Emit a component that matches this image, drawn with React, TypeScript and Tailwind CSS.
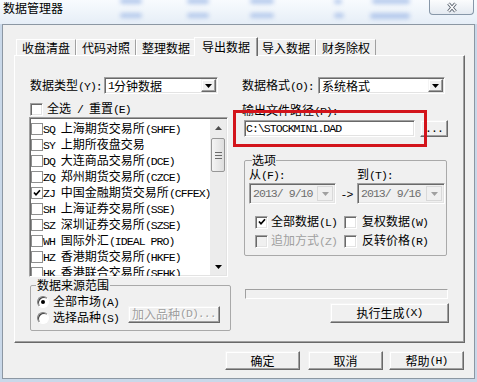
import React from "react";

const raised =
  "border border-t-[#f4f4f4] border-l-[#f4f4f4] border-r-[#696969] border-b-[#696969] shadow-[inset_-1px_-1px_0_#a0a0a0,inset_1px_1px_0_#ffffff]";
const sunken =
  "border border-t-[#a0a0a0] border-l-[#a0a0a0] border-r-white border-b-white shadow-[inset_1px_1px_0_#696969,inset_-1px_-1px_0_#e3e3e3]";

// SimSun draws ASCII as half-width mono; mimic with Liberation Mono runs
function T({ s }: { s: string }) {
  const parts = s.split(/([\x20-\x7e]+)/).filter(Boolean);
  return (
    <>
      {parts.map((p, i) =>
        /^[\x20-\x7e]+$/.test(p) ? (
          <span key={i} className="whitespace-pre font-['Liberation_Mono',monospace] text-[11.5px] tracking-[-0.95px]">
            {p}
          </span>
        ) : (
          <span key={i}>{p}</span>
        )
      )}
    </>
  );
}

function Arrow({ gray }: { gray?: boolean }) {
  return (
    <svg width="7" height="4" viewBox="0 0 7 4">
      <polygon points="0,0 7,0 3.5,4" fill={gray ? "#a0a0a0" : "#000"} />
    </svg>
  );
}

function Check() {
  return (
    <svg width="8" height="8" viewBox="0 0 8 8">
      <polyline points="1,3.5 3,5.8 7,1.2" fill="none" stroke="#000" strokeWidth="1.7" />
    </svg>
  );
}

function Combo({ text, className }: { text: string; className: string }) {
  return (
    <div className={`${sunken} flex items-stretch bg-white p-[1px] ${className}`}>
      <div className="flex flex-1 items-center pl-[2px] leading-[13px]">
        <T s={text} />
      </div>
      <div className={`${raised} flex w-[15px] items-center justify-center bg-[#f0f0f0]`}>
        <Arrow />
      </div>
    </div>
  );
}

function DateCombo({ text, className }: { text: string; className: string }) {
  return (
    <div className={`${sunken} flex items-stretch bg-[#f0f0f0] p-[2px] text-[#6d6d6d] ${className}`}>
      <div className="flex flex-1 items-center pl-[1px]">
        <T s={text} />
      </div>
      <div className="flex w-[16px] items-center justify-center border border-[#d9d9d9] bg-[#f0f0f0]">
        <Arrow gray />
      </div>
    </div>
  );
}

function Box({ checked, disabled }: { checked?: boolean; disabled?: boolean }) {
  return (
    <span
      className={`${sunken} flex h-[13px] w-[13px] shrink-0 items-center justify-center ${
        disabled ? "bg-[#f0f0f0]" : "bg-white"
      }`}
    >
      {checked && <Check />}
    </span>
  );
}

function Radio({ checked }: { checked?: boolean }) {
  return (
    <span className="flex h-[12px] w-[12px] shrink-0 items-center justify-center rounded-full border border-t-[#808080] border-l-[#808080] border-r-white border-b-white bg-white shadow-[inset_1px_1px_0_#404040]">
      {checked && <span className="h-[4px] w-[4px] rounded-full bg-black" />}
    </span>
  );
}

const markets: [string, boolean][] = [
  ["SQ 上海期货交易所(SHFE)", false],
  ["SY 上期所夜盘交易", false],
  ["DQ 大连商品交易所(DCE)", false],
  ["ZQ 郑州期货交易所(CZCE)", false],
  ["ZJ 中国金融期货交易所(CFFEX)", true],
  ["SH 上海证券交易所(SSE)", false],
  ["SZ 深圳证券交易所(SZSE)", false],
  ["WH 国际外汇(IDEAL PRO)", false],
  ["HZ 香港期货交易所(HKFE)", false],
  ["HK 香港联合交易所(SEHK)", false],
];

const tabs = ["收盘清盘", "代码对照", "整理数据", "导出数据", "导入数据", "财务除权"];

export default function App() {
  return (
    <div className="relative h-[382px] w-[477px] overflow-hidden bg-[#c9d8e9] font-['Noto_Sans_CJK_SC',sans-serif] text-[12px] leading-[16px] text-black">
      {/* title bar (glass) */}
      <div className="relative flex h-[24px] bg-gradient-to-b from-[#f8fbfe] to-[#e6eef7]">
        <div className="absolute left-[120px] top-[-2px] h-[6px] w-[22px] rounded-full bg-[#9db8e6] opacity-70 blur-[2px]" />
        <div className="absolute left-[120px] top-[13px] h-[5px] w-[22px] rounded-full bg-[#9db8e6] opacity-70 blur-[2px]" />
        <div className="absolute left-[187px] top-[-2px] h-[6px] w-[22px] rounded-full bg-[#9db8e6] opacity-70 blur-[2px]" />
        <div className="absolute left-[187px] top-[13px] h-[5px] w-[22px] rounded-full bg-[#9db8e6] opacity-70 blur-[2px]" />
        <div className="absolute left-[250px] top-[-2px] h-[6px] w-[24px] rounded-full bg-[#9db8e6] opacity-70 blur-[2px]" />
        <div className="absolute left-[250px] top-[13px] h-[5px] w-[24px] rounded-full bg-[#9db8e6] opacity-70 blur-[2px]" />
        <div className="absolute left-[334px] top-[-1px] h-[5px] w-[8px] rounded-full bg-[#9db8e6] opacity-70 blur-[2px]" />
        <div className="absolute left-[334px] top-[13px] h-[5px] w-[10px] rounded-full bg-[#9db8e6] opacity-70 blur-[2px]" />
        <div className="absolute left-[372px] top-[-2px] h-[6px] w-[38px] rounded-full bg-[#9db8e6] opacity-70 blur-[2px]" />
        <div className="absolute left-[370px] top-[13px] h-[6px] w-[40px] rounded-full bg-[#9db8e6] opacity-70 blur-[2px]" />
        <div className="relative pl-[3px] pt-[1px] leading-[14px]">数据管理器</div>
        <div className="relative ml-auto mr-[3px] flex h-[15px] w-[45px] items-center justify-center rounded-b-[4px] border border-t-0 border-[#8797a8] bg-gradient-to-b from-[#fbfcfd] to-[#e4eaf1]">
          <svg width="14" height="11" viewBox="0 0 14 11">
            <path d="M3.5 1.5 L10.5 9.5 M10.5 1.5 L3.5 9.5" stroke="#5d6672" strokeWidth="3.4" />
            <path d="M3.5 1.5 L10.5 9.5 M10.5 1.5 L3.5 9.5" stroke="#ffffff" strokeWidth="1.4" />
          </svg>
        </div>
      </div>

      {/* dialog body */}
      <div className="ml-[2px] flex h-[355px] w-[473px] flex-col border border-[#8c97a3] bg-[#f0f0f0] pl-[11px] pt-[12px]">
        {/* tab strip */}
        <div className="flex h-[18px] items-end pl-[2px]">
          {tabs.map((t, i) =>
            i === 3 ? (
              <div
                key={t}
                className="relative z-10 -mx-[2px] -mb-[1px] flex h-[19px] w-[64px] justify-center border-x border-t border-l-white border-t-white border-r-[#696969] bg-[#f0f0f0] pt-[1px] shadow-[inset_-1px_0_0_#a0a0a0]"
              >
                {t}
              </div>
            ) : (
              <div
                key={t}
                className="flex h-[16px] w-[60px] items-center justify-center border-x border-t border-l-white border-t-white border-r-[#a0a0a0]"
              >
                {t}
              </div>
            )
          )}
        </div>

        {/* tab panel */}
        <div className="flex h-[288px] w-[451px] border border-t-white border-l-white border-r-[#696969] border-b-[#696969] pl-[14px] pt-[21px] shadow-[inset_-1px_-1px_0_#a0a0a0]">
          {/* left column */}
          <div className="flex w-[202px] flex-col">
            <div className="flex h-[17px] items-center">
              <div className="w-[75px] pl-[1px]">
                <T s="数据类型(Y):" />
              </div>
              <Combo text="1分钟数据" className="h-[17px] w-[114px]" />
            </div>
            <div className="mt-[8px] flex h-[14px] items-center pl-[1px]">
              <Box />
              <span className="ml-[4px]">
                <T s="全选 / 重置(E)" />
              </span>
            </div>
            <div className={`${sunken} mt-[1px] flex h-[160px] w-[199px] bg-white`}>
              <div className="w-[180px] shrink-0 overflow-hidden pl-[1px] pt-[3px]">
                {markets.map(([m, on]) => (
                  <div key={m} className="flex h-[16px] items-center whitespace-nowrap">
                    <span className="flex h-[12px] w-[12px] shrink-0 items-center justify-center border border-[#8e8f8f] bg-white">
                      {on && <Check />}
                    </span>
                    <span>
                      <T s={m} />
                    </span>
                  </div>
                ))}
              </div>
              <div className="my-[1px] ml-auto mr-[1px] flex w-[16px] flex-col bg-[#ececec]">
                <div className="flex h-[17px] items-center justify-center">
                  <svg width="7" height="4" viewBox="0 0 7 4">
                    <polygon points="0,4 7,4 3.5,0" fill="#4d4d4d" />
                  </svg>
                </div>
                <div className="mx-[1px] mt-[2px] flex h-[34px] flex-col items-center justify-center gap-[2px] rounded-[2px] border border-[#979797] bg-gradient-to-r from-[#f4f4f4] to-[#dedede]">
                  <span className="h-[1px] w-[7px] bg-[#6b6b6b]" />
                  <span className="h-[1px] w-[7px] bg-[#6b6b6b]" />
                  <span className="h-[1px] w-[7px] bg-[#6b6b6b]" />
                </div>
                <div className="flex-1" />
                <div className="flex h-[17px] items-center justify-center">
                  <Arrow />
                </div>
              </div>
            </div>
            <fieldset className="ml-[1px] h-[54px] w-[201px] rounded-[2px] border border-[#a9a9a9] p-0">
              <legend className="ml-[5px] px-[1px] leading-[16px]">数据来源范围</legend>
              <div className="pl-[6px] pt-[1px]">
                <div className="flex h-[16px] items-center">
                  <Radio checked />
                  <span className="ml-[4px]">
                    <T s="全部市场(A)" />
                  </span>
                </div>
                <div className="flex h-[16px] items-center">
                  <Radio />
                  <span className="ml-[4px]">
                    <T s="选择品种(S)" />
                  </span>
                  <div
                    className={`${raised} mb-[8px] ml-[9px] flex h-[17px] w-[92px] items-center justify-center text-[#a0a0a0] [text-shadow:1px_1px_0_#ffffff]`}
                  >
                    <T s="加入品种(D)..." />
                  </div>
                </div>
              </div>
            </fieldset>
          </div>

          {/* right column */}
          <div className="ml-[11px] flex w-[207px] flex-col">
            <div className="flex h-[17px] items-center">
              <div className="w-[76px]">
                <T s="数据格式(O):" />
              </div>
              <Combo text="系统格式" className="h-[17px] w-[127px]" />
            </div>
            <div className="mt-[8px] h-[16px]">
              <T s="输出文件路径(P):" />
            </div>
            <div className="mt-[2px] flex h-[17px]">
              <div className={`${sunken} ml-[2px] flex w-[171px] items-center bg-white pl-[1px]`}>
                <T s="C:\STOCKMIN1.DAD" />
              </div>
              <div className={`${raised} ml-[5px] flex w-[28px] items-end justify-center pb-[1px] leading-[12px]`}>
                <T s="..." />
              </div>
            </div>
            <fieldset className="ml-[2px] mt-[15px] h-[104px] w-[203px] rounded-[2px] border border-[#a9a9a9] p-0">
              <legend className="ml-[7px] px-0 leading-[16px]">选项</legend>
              <div className="pl-[4px]">
                <div className="flex h-[14px] items-center">
                  <span className="w-[108px]">
                    <T s="从(F):" />
                  </span>
                  <span>
                    <T s="到(T):" />
                  </span>
                </div>
                <div className="mt-[1px] flex h-[21px] items-center">
                  <DateCombo text="2013/ 9/10" className="h-[21px] w-[87px]" />
                  <span className="w-[21px] text-center">
                    <T s="->" />
                  </span>
                  <DateCombo text="2013/ 9/16" className="h-[21px] w-[88px]" />
                </div>
                <div className="mt-[10px] flex h-[16px] items-center pl-[6px]">
                  <div className="flex w-[89px] items-center">
                    <Box checked />
                    <span className="ml-[3px]">
                      <T s="全部数据(L)" />
                    </span>
                  </div>
                  <Box />
                  <span className="ml-[5px]">
                    <T s="复权数据(W)" />
                  </span>
                </div>
                <div className="mt-[3px] flex h-[16px] items-center pl-[6px]">
                  <div className="flex w-[89px] items-center text-[#a0a0a0]">
                    <Box disabled />
                    <span className="ml-[3px]">
                      <T s="追加方式(Z)" />
                    </span>
                  </div>
                  <Box />
                  <span className="ml-[5px]">
                    <T s="反转价格(R)" />
                  </span>
                </div>
              </div>
            </fieldset>
            <div className="ml-[3px] mt-[33px] h-[10px] w-[203px] border border-t-[#a0a0a0] border-l-[#a0a0a0] border-r-white border-b-white bg-[#f0f0f0]" />
            <div className={`${raised} mt-[4px] flex h-[20px] w-[119px] items-center justify-center self-end`}>
              <T s="执行生成(X)" />
            </div>
          </div>
        </div>

        {/* dialog buttons */}
        <div className="mt-[8px] flex w-[451px] justify-end pr-[1px]">
          <div className={`${raised} mr-[8px] flex h-[19px] w-[75px] items-center justify-center`}>确定</div>
          <div className={`${raised} mr-[6px] flex h-[19px] w-[75px] items-center justify-center`}>取消</div>
          <div className={`${raised} flex h-[19px] w-[75px] items-center justify-center`}>
            <T s="帮助(H)" />
          </div>
        </div>
      </div>

      {/* red annotation frame */}
      <div className="absolute left-[233px] top-[110px] h-[37px] w-[194px] border-[3px] border-[#d3141b]" />
    </div>
  );
}
